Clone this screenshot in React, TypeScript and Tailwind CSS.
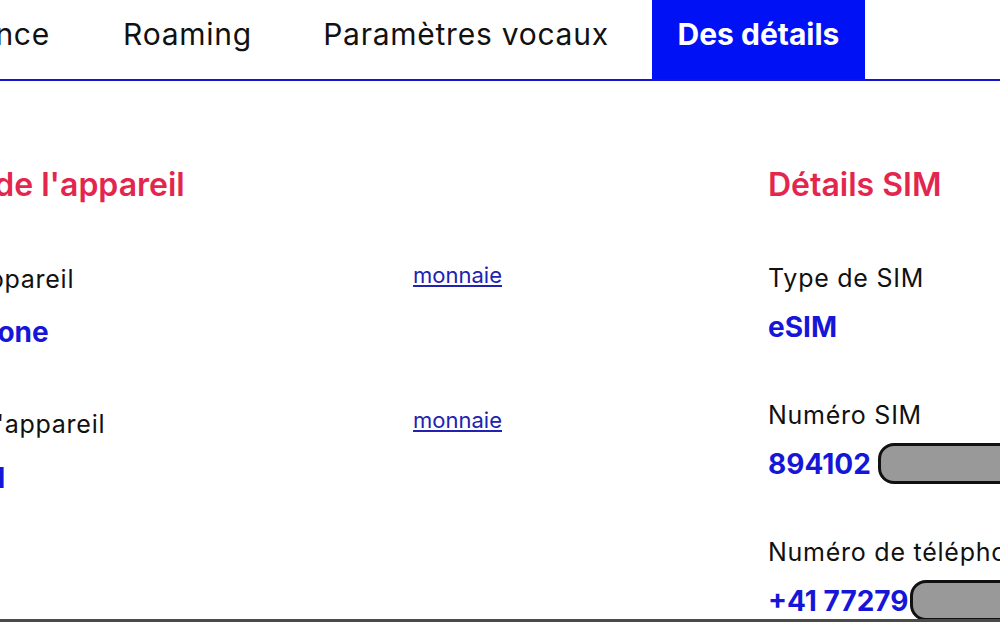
export default function App() {
  return (
    <div className="h-[622px] w-full overflow-hidden bg-white border-b-[3px] border-[#4a4a4a] font-['Inter',sans-serif] text-[#111111]">
      <nav className="flex gap-[17px] h-[81px] border-b-2 border-[#1414d2]">
        <div className="w-[78px] shrink-0 flex justify-end pr-7 pt-4 text-[30px] leading-9 tracking-[0.025em] whitespace-nowrap">
          Assistance
        </div>
        <div className="w-[185px] shrink-0 flex justify-center pt-4 text-[30px] leading-9 tracking-[0.025em] whitespace-nowrap">
          Roaming
        </div>
        <div className="w-[338px] shrink-0 flex justify-center pt-4 text-[30px] leading-9 tracking-[0.025em] whitespace-nowrap">
          Paramètres vocaux
        </div>
        <div className="w-[213px] shrink-0 flex justify-center pt-4 text-[30px] leading-9 whitespace-nowrap bg-[#0011f5] text-white font-bold">
          Des détails
        </div>
      </nav>

      <main className="flex pt-[84px]">
        <section className="-ml-[120px] w-[622px] shrink-0">
          <h2 className="text-[32px] leading-10 font-semibold text-[#e3264e] whitespace-nowrap">
            Détails de l'appareil
          </h2>

          <div className="mt-[58px] flex justify-between items-start">
            <div>
              <p className="text-[25px] leading-8 tracking-[0.03em] whitespace-nowrap">Type d'appareil</p>
              <p className="mt-[19px] text-[28px] leading-9 font-bold text-[#1616d8] whitespace-nowrap">
                Smartphone
              </p>
            </div>
            <a href="#" className="-mt-0.5 text-[22px] leading-7 underline text-[#2222b0]">
              monnaie
            </a>
          </div>

          <div className="mt-[58px] flex justify-between items-start">
            <div>
              <p className="text-[25px] leading-8 tracking-[0.03em] whitespace-nowrap">Modèle d'appareil</p>
              <p className="mt-[20px] text-[28px] leading-9 font-bold text-[#1616d8] whitespace-nowrap">
                iPhone 11
              </p>
            </div>
            <a href="#" className="-mt-0.5 text-[22px] leading-7 underline text-[#2222b0]">
              monnaie
            </a>
          </div>
        </section>

        <section className="ml-[266px] w-[420px] shrink-0">
          <h2 className="text-[32px] leading-10 font-semibold text-[#e3264e] whitespace-nowrap">
            Détails SIM
          </h2>

          <p className="mt-[57px] text-[25px] leading-8 tracking-[0.03em] whitespace-nowrap">Type de SIM</p>
          <p className="mt-[15px] text-[28px] leading-9 font-bold text-[#1616d8] whitespace-nowrap">eSIM</p>

          <p className="mt-[54px] text-[25px] leading-8 tracking-[0.03em] whitespace-nowrap">Numéro SIM</p>
          <div className="mt-[12px] flex items-center">
            <span className="text-[28px] leading-9 font-bold text-[#1616d8] whitespace-nowrap">894102</span>
            <span className="ml-[7px] h-[41px] w-[220px] shrink-0 rounded-[16px] border-[3px] border-[#111111] bg-[#999999]"></span>
          </div>

          <p className="mt-[52px] text-[25px] leading-8 tracking-[0.03em] whitespace-nowrap">Numéro de téléphone</p>
          <div className="mt-[12px] flex items-center">
            <span className="text-[28px] leading-9 font-bold text-[#1616d8] whitespace-nowrap">+41 77279</span>
            <span className="ml-[1px] h-[41px] w-[220px] shrink-0 rounded-[16px] border-[3px] border-[#111111] bg-[#999999]"></span>
          </div>
        </section>
      </main>
    </div>
  );
}
